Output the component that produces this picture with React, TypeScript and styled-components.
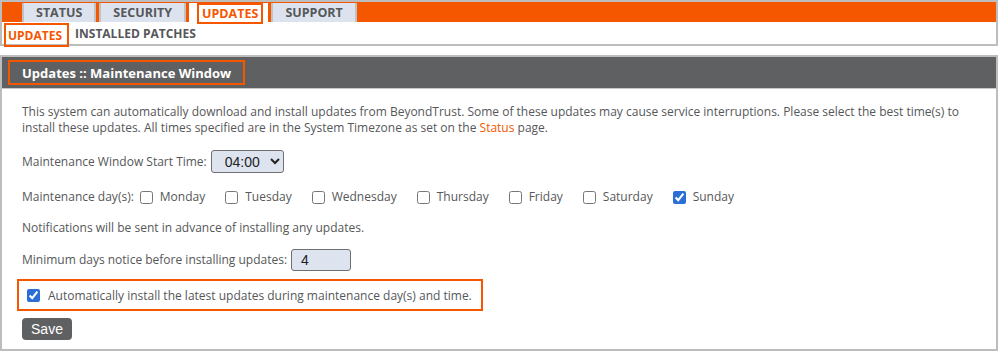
import React from 'react';
import styled, { createGlobalStyle } from 'styled-components';

const orange = '#f55600';
const line = '#bdbdbd';
const ink = '#555759';

const Global = createGlobalStyle`
  body {
    margin: 0;
    background: #fff;
    font-family: 'Open Sans', 'Noto Sans', sans-serif;
  }
`;

const Page = styled.div`
  width: 998px;
  display: flex;
  flex-direction: column;
`;

const TabBar = styled.div`
  display: flex;
  align-items: flex-end;
  height: 20px;
  padding-left: 20px;
  background: ${orange};
  border: 2px solid ${line};
  border-bottom: none;
`;

const Tab = styled.div<{ $active?: boolean }>`
  display: flex;
  align-items: center;
  box-sizing: border-box;
  height: ${({ $active }) => ($active ? '21px' : '19px')};
  margin-bottom: ${({ $active }) => ($active ? '-2px' : '0')};
  margin-right: 3px;
  padding: ${({ $active }) => ($active ? '0 3px 0 6px' : '0 12px')};
  background: ${({ $active }) => ($active ? '#fff' : '#dde3ee')};
  border-left: 2px solid ${({ $active }) => ($active ? '#fff' : '#c2c2c2')};
  border-right: 2px solid ${({ $active }) => ($active ? '#fff' : '#c2c2c2')};
  color: ${({ $active }) => ($active ? orange : ink)};
  font-size: 12.5px;
  font-weight: 700;
  position: relative;
  z-index: 1;
`;

const TabMark = styled.span`
  display: flex;
  align-items: center;
  box-sizing: border-box;
  height: 21px;
  padding: 0 3px;
  border: 2px solid ${orange};
`;

const SubNav = styled.div`
  display: flex;
  align-items: flex-start;
  gap: 6px;
  height: 22px;
  padding-left: 2px;
  border: 2px solid ${line};
  border-top: none;
`;

const SubItem = styled.div<{ $active?: boolean }>`
  display: flex;
  align-items: center;
  box-sizing: border-box;
  height: ${({ $active }) => ($active ? '24px' : '22px')};
  margin-top: ${({ $active }) => ($active ? '1px' : '0')};
  padding: ${({ $active }) => ($active ? '0 5px 0 2px' : '0')};
  border: ${({ $active }) => ($active ? `2px solid ${orange}` : 'none')};
  color: ${({ $active }) => ($active ? orange : ink)};
  font-size: 12px;
  font-weight: 700;
  position: relative;
  z-index: 1;
`;

const Panel = styled.section`
  margin-top: 9px;
  border: 2px solid ${line};
`;

const PanelHead = styled.header`
  display: flex;
  align-items: center;
  height: 31px;
  padding-left: 6px;
  background: #5f6062;
  border-bottom: 1px solid #c8c8c8;
`;

const PanelTitle = styled.h2`
  margin: 0;
  display: flex;
  align-items: center;
  box-sizing: border-box;
  height: 25px;
  padding: 0 12px;
  border: 2px solid ${orange};
  color: #fff;
  font-size: 13px;
  font-weight: 700;
`;

const Body = styled.div`
  display: flex;
  flex-direction: column;
  align-items: flex-start;
  padding: 15px 20px 9px;
  color: ${ink};
  font-size: 12px;
`;

const Intro = styled.p`
  margin: 0;
  line-height: 16px;
`;

const Link = styled.a`
  color: ${orange};
  text-decoration: none;
`;

const Row = styled.div<{ $gap: number }>`
  display: flex;
  align-items: center;
  gap: 4px;
  margin-top: ${({ $gap }) => $gap}px;
  line-height: 16px;
`;

const Select = styled.select`
  box-sizing: border-box;
  width: 73px;
  height: 23px;
  padding: 0 4px 0 9px;
  background: #dde3ef;
  border: 1px solid #6f6f6f;
  border-radius: 3px;
  color: #222;
  font-family: 'Liberation Sans', Arial, sans-serif;
  font-size: 14px;
`;

const Days = styled.div`
  display: flex;
  align-items: center;
  margin-left: 2px;
  gap: 20px;
`;

const Day = styled.label`
  display: flex;
  align-items: center;
  gap: 7px;
`;

const Box = styled.input`
  width: 13px;
  height: 13px;
  margin: 0;
  accent-color: #2b6fd6;
`;

const NumberInput = styled.input`
  box-sizing: border-box;
  width: 60px;
  height: 22px;
  padding: 0 9px;
  background: #dde3ef;
  border: 1px solid #6f6f6f;
  border-radius: 3px;
  color: #222;
  font-family: 'Liberation Sans', Arial, sans-serif;
  font-size: 14px;
`;

const Highlight = styled.label`
  display: flex;
  align-items: center;
  gap: 8px;
  box-sizing: border-box;
  height: 32px;
  margin: 8px 0 0 -5px;
  padding: 0 9px 0 8px;
  border: 2px solid ${orange};
`;

const SaveButton = styled.button`
  margin-top: 7px;
  width: 50px;
  height: 22px;
  padding: 0;
  background: #5f6062;
  border: none;
  border-radius: 4px;
  color: #fff;
  font-family: 'Liberation Sans', Arial, sans-serif;
  font-size: 14px;
`;

const tabs = ['STATUS', 'SECURITY', 'UPDATES', 'SUPPORT'];
const days = ['Monday', 'Tuesday', 'Wednesday', 'Thursday', 'Friday', 'Saturday', 'Sunday'];

export default function App() {
  return (
    <Page>
      <Global />
      <TabBar>
        {tabs.map((t) =>
          t === 'UPDATES' ? (
            <Tab key={t} $active>
              <TabMark>{t}</TabMark>
            </Tab>
          ) : (
            <Tab key={t}>{t}</Tab>
          )
        )}
      </TabBar>
      <SubNav>
        <SubItem $active>UPDATES</SubItem>
        <SubItem>INSTALLED PATCHES</SubItem>
      </SubNav>
      <Panel>
        <PanelHead>
          <PanelTitle>Updates :: Maintenance Window</PanelTitle>
        </PanelHead>
        <Body>
          <Intro>
            This system can automatically download and install updates from BeyondTrust. Some of these updates may
            cause service interruptions. Please select the best time(s) to install these updates. All times specified
            are in the System Timezone as set on the <Link href="#">Status</Link> page.
          </Intro>
          <Row $gap={14}>
            <span>Maintenance Window Start Time:</span>
            <Select defaultValue="04:00">
              <option>04:00</option>
            </Select>
          </Row>
          <Row $gap={16}>
            <span>Maintenance day(s):</span>
            <Days>
              {days.map((d) => (
                <Day key={d}>
                  <Box type="checkbox" defaultChecked={d === 'Sunday'} />
                  {d}
                </Day>
              ))}
            </Days>
          </Row>
          <Row $gap={15}>Notifications will be sent in advance of installing any updates.</Row>
          <Row $gap={13}>
            <span>Minimum days notice before installing updates:</span>
            <NumberInput defaultValue="4" />
          </Row>
          <Highlight>
            <Box type="checkbox" defaultChecked />
            Automatically install the latest updates during maintenance day(s) and time.
          </Highlight>
          <SaveButton>Save</SaveButton>
        </Body>
      </Panel>
    </Page>
  );
}
